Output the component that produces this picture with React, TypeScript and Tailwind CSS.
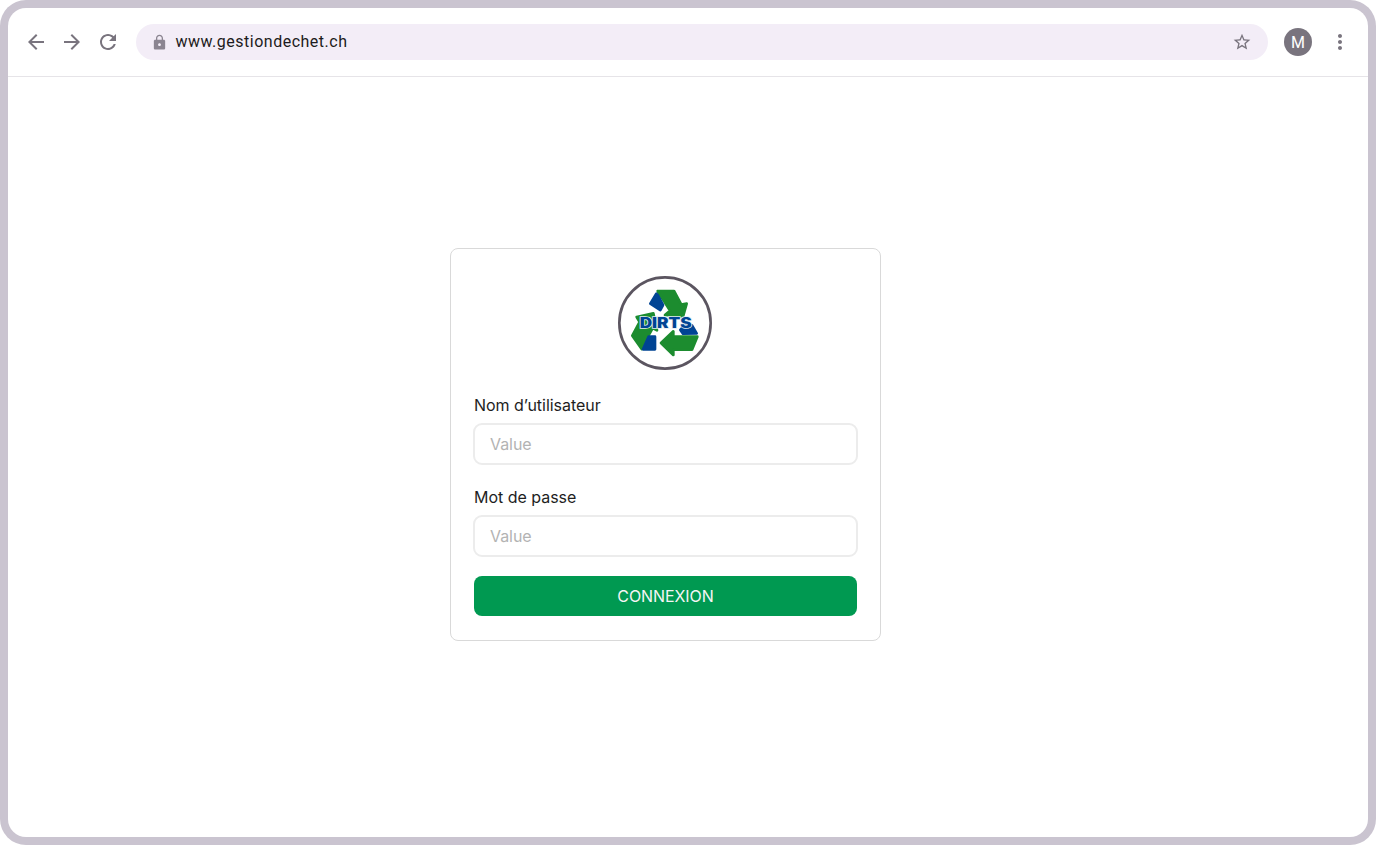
import type { ReactNode } from "react";

function Icon({ d, className }: { d: string; className: string }) {
  return (
    <svg viewBox="0 0 24 24" className={`shrink-0 ${className}`}>
      <path d={d} />
    </svg>
  );
}

const icons = {
  back: "M20 11H7.83l5.59-5.59L12 4l-8 8 8 8 1.41-1.41L7.83 13H20v-2z",
  forward: "M12 4l-1.41 1.41L16.17 11H4v2h12.17l-5.58 5.59L12 20l8-8z",
  reload:
    "M17.65 6.35C16.2 4.9 14.21 4 12 4c-4.42 0-7.99 3.58-7.99 8s3.57 8 7.99 8c3.73 0 6.84-2.55 7.73-6h-2.08c-.82 2.33-3.04 4-5.65 4-3.31 0-6-2.69-6-6s2.69-6 6-6c1.66 0 3.14.69 4.22 1.78L13 11h7V4l-2.35 2.35z",
  lock: "M18 8h-1V6c0-2.76-2.24-5-5-5S7 3.24 7 6v2H6c-1.1 0-2 .9-2 2v10c0 1.1.9 2 2 2h12c1.1 0 2-.9 2-2V10c0-1.1-.9-2-2-2zm-6 9c-1.1 0-2-.9-2-2s.9-2 2-2 2 .9 2 2-.9 2-2 2zm3.1-9H8.9V6c0-1.71 1.39-3.1 3.1-3.1 1.71 0 3.1 1.39 3.1 3.1v2z",
  star: "M22 9.24l-7.19-.62L12 2 9.19 8.63 2 9.24l5.46 4.73L5.82 21 12 17.27 18.18 21l-1.63-7.03L22 9.24zM12 15.4l-3.76 2.27 1-4.28-3.32-2.88 4.38-.38L12 6.1l1.71 4.04 4.38.38-3.32 2.88 1 4.28L12 15.4z",
  more: "M12 8c1.1 0 2-.9 2-2s-.9-2-2-2-2 .9-2 2 .9 2 2 2zm0 2c-1.1 0-2 .9-2 2s.9 2 2 2 2-.9 2-2-.9-2-2-2zm0 6c-1.1 0-2 .9-2 2s.9 2 2 2 2-.9 2-2-.9-2-2-2z",
};

function Toolbar() {
  return (
    <header className="flex h-[69px] shrink-0 items-center border-b border-[#e6e4e8] px-4 font-['Roboto',sans-serif]">
      <div className="flex gap-3 fill-[#79747e]">
        <Icon d={icons.back} className="size-6" />
        <Icon d={icons.forward} className="size-6" />
        <Icon d={icons.reload} className="size-6" />
      </div>
      <div className="ml-4 flex h-9 flex-1 items-center rounded-full bg-[#f3edf7] pr-4 pl-[15px]">
        <Icon d={icons.lock} className="size-[17px] fill-[#8b8591]" />
        <span className="ml-[7.5px] flex-1 text-base tracking-[0.5px] text-[#1d1b20]">www.gestiondechet.ch</span>
        <Icon d={icons.star} className="size-5 fill-[#79747e]" />
      </div>
      <div className="ml-4 flex size-7 items-center justify-center rounded-full bg-[#79747e] pt-px text-base leading-none text-white">
        M
      </div>
      <Icon d={icons.more} className="ml-4 size-6 fill-[#79747e]" />
    </header>
  );
}

function Logo() {
  return (
    <svg viewBox="24 18 282 282" className="mr-px size-[94px] self-center">
      <circle cx="165" cy="159" r="137" fill="#fff" stroke="#5b5560" strokeWidth="8" />
      <g strokeLinejoin="round" strokeWidth="8">
        <g fill="#1c8c2f" stroke="#1c8c2f">
          <path d="M143 63H192L214 104L230 101L219 140L165 135L180 122L160 90L146 70Z" />
          <path d="M80 141L130 130L141 181L128 174L118 192L95 237L67 197L89 156Z" />
          <path d="M153 219L190 184V200H262L246 239H190V255Z" />
        </g>
        <g fill="#004494" stroke="#004494">
          <path d="M139 71L121 101L151 120L159 105L143 75Z" />
          <path d="M116 200H135V238H99Z" />
          <path d="M211 180L222 168L246 166L260 190L219 191Z" />
        </g>
      </g>
      <text
        x="89"
        y="174"
        textLength="156"
        lengthAdjust="spacingAndGlyphs"
        fontSize="42"
        fontWeight="900"
        fill="#004494"
        stroke="#e4edf2"
        strokeWidth="4"
        paintOrder="stroke"
        className="font-['Inter',sans-serif]"
      >
        DIRTS
      </text>
    </svg>
  );
}

function Field({ label, children }: { label: string; children?: ReactNode }) {
  return (
    <label className="flex flex-col gap-[7px]">
      <span className="leading-[22px] tracking-[-0.02px] text-[#1e1e1e]">{label}</span>
      <span className="-mx-px flex h-[42px] items-center rounded-[9px] border-2 border-[#ececec] px-[15px] tracking-[-0.05px] text-[#b3b3b3]">
        {children}
      </span>
    </label>
  );
}

export default function App() {
  return (
    <div className="flex h-[845px] w-[1376px] flex-col overflow-hidden rounded-[26px] bg-[#cac4d0] p-2">
      <div className="flex flex-1 flex-col overflow-hidden rounded-[18px] bg-white">
        <Toolbar />
        <main className="flex flex-1 items-start pt-[171px] pl-[442px] font-['Inter',sans-serif] text-base">
          <form className="flex h-[393px] w-[431px] flex-col rounded-lg border border-[#d9d9d9] px-[23px] pt-[27px]">
            <Logo />
            <div className="mt-6 flex flex-col gap-[21px]">
              <Field label="Nom d’utilisateur">Value</Field>
              <Field label="Mot de passe">Value</Field>
            </div>
            <button type="button" className="mt-[19px] h-10 rounded-lg bg-[#009951] tracking-[-0.08px] text-[#f5f5f5]">
              CONNEXION
            </button>
          </form>
        </main>
      </div>
    </div>
  );
}
